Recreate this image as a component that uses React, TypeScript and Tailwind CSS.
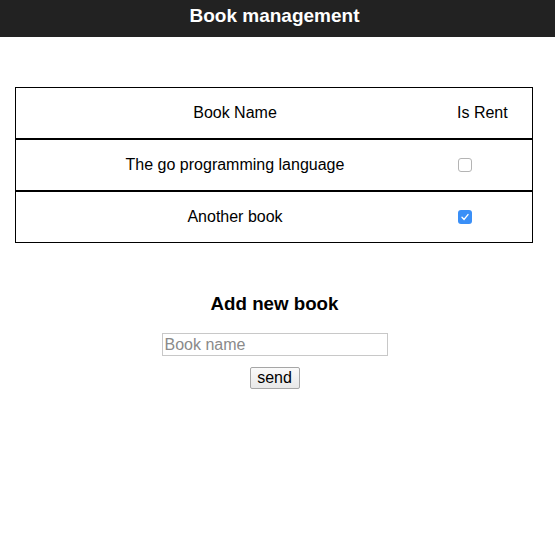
import React from 'react';

const books = [
  { name: 'The go programming language', rent: false },
  { name: 'Another book', rent: true },
];

function Check({ on }: { on: boolean }) {
  if (on) {
    return (
      <span className="flex h-[14px] w-[14px] items-center justify-center rounded-[3px] bg-[#3a8ff7]">
        <svg width="10" height="10" viewBox="0 0 10 10" fill="none">
          <path d="M2 5.3 L4.1 7.4 L8 2.6" stroke="white" strokeWidth="1.4" strokeLinecap="round" strokeLinejoin="round" />
        </svg>
      </span>
    );
  }
  return <span className="block h-[14px] w-[14px] rounded-[3px] border border-[#b4b4b4] bg-white" />;
}

export default function App() {
  return (
    <div className="min-h-[556px] bg-white text-black" style={{ fontFamily: '"Liberation Sans", Arial, sans-serif' }}>
      <div className="flex h-[37px] items-center justify-center bg-[#222222] pb-[4px] pr-[6px]">
        <h1 className="text-[19px] font-bold text-white">Book management</h1>
      </div>

      <div className="ml-[15px] mt-[50px] w-[518px] border border-black text-[16px]">
        <div className="grid h-[50px] grid-cols-[438px_1fr] items-center">
          <div className="text-center">Book Name</div>
          <div className="pl-[3px]">Is Rent</div>
        </div>
        {books.map((b) => (
          <div key={b.name} className="grid h-[52px] grid-cols-[438px_1fr] items-center border-t-2 border-black">
            <div className="text-center">{b.name}</div>
            <div className="pl-[4px]">
              <Check on={b.rent} />
            </div>
          </div>
        ))}
      </div>

      <div className="mt-[50px] flex flex-col items-center pr-[6px]">
        <h3 className="text-[18.72px] font-bold leading-[22px]">Add new book</h3>
        <input
          placeholder="Book name"
          className="mt-[18px] h-[23px] w-[226px] border border-[#c8c8c8] px-[2px] text-[16px] outline-none placeholder:text-[#8a8a8a]"
        />
        <button className="mt-[11px] h-[22px] w-[50px] rounded-[2px] border border-[#a6a6a6] bg-gradient-to-b from-[#fafafa] to-[#e8e8e8] text-[16px] leading-none">
          send
        </button>
      </div>
    </div>
  );
}
